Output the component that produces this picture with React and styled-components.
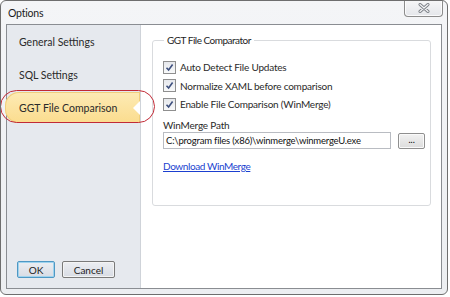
import React from "react";
import styled, { createGlobalStyle } from "styled-components";

const Global = createGlobalStyle`
  html, body {
    margin: 0;
    padding: 0;
    background: #ffffff;
  }
  body {
    font-family: "Lato", "Liberation Sans", sans-serif;
    font-size: 10px;
    letter-spacing: -0.2px;
    color: #1e1e1e;
  }
`;

const Window = styled.div`
  position: relative;
  width: 448px;
  height: 295px;
  border: 1px solid #6e6e6e;
  border-radius: 6px;
  background: linear-gradient(180deg, #f4f5f7 0%, #eceef1 100%);
  display: flex;
  flex-direction: column;
  box-sizing: border-box;
  overflow: hidden;
`;

const TitleBar = styled.div`
  height: 23px;
  display: flex;
  align-items: flex-start;
  padding-left: 7px;
`;

const Title = styled.span`
  margin-top: 6px;
  font-size: 10.5px;
  color: #1b1b1b;
`;

const CloseButton = styled.div`
  margin-left: auto;
  margin-right: 4px;
  margin-top: -1px;
  width: 37px;
  height: 16px;
  border: 1px solid #8c8c8c;
  border-top: none;
  border-radius: 0 0 4px 4px;
  background: linear-gradient(180deg, #f7f7f8 0%, #e4e6ea 100%);
  display: flex;
  align-items: center;
  justify-content: center;
  box-shadow: inset 0 0 0 1px rgba(255, 255, 255, 0.8);
`;

const Body = styled.div`
  flex: 1;
  margin: 0 5px 5px 5px;
  border: 1px solid #8a8d92;
  display: flex;
  background: #ffffff;
`;

const Sidebar = styled.div`
  flex-shrink: 0;
  width: 133px;
  background: #e6e9ee;
  border-right: 1px solid #cfd3d9;
  display: flex;
  flex-direction: column;
  font-size: 10.5px;
  letter-spacing: 0;
`;

const NavItem = styled.div`
  position: relative;
  height: 33px;
  display: flex;
  align-items: center;
  padding-left: 12px;
  color: #2a2a2a;
  ${(p) =>
    p.$active &&
    `
    margin: 1px 0 1px -2px;
    height: 31px;
    padding-left: 14px;
    border-radius: 14px 0 0 14px;
    background: linear-gradient(180deg, #fdebb5 0%, #fbdc8e 100%);
    box-shadow: inset 0 0 0 1px #f1cf7c;
    &::after {
      content: "";
      position: absolute;
      right: 0;
      top: 50%;
      margin-top: -7px;
      border-style: solid;
      border-width: 7px 7px 7px 0;
      border-color: transparent #ffffff transparent transparent;
    }
  `}
`;

const Annotation = styled.div`
  position: absolute;
  left: -5px;
  top: -2px;
  width: 153px;
  height: 31px;
  border: 1.5px solid #c12a36;
  border-radius: 17px;
  pointer-events: none;
`;

const Footer = styled.div`
  margin-top: auto;
  display: flex;
  gap: 7px;
  padding: 0 0 10px 10px;
`;

const Button = styled.button`
  height: 17px;
  width: ${(p) => p.$w}px;
  padding: 0;
  font-family: inherit;
  font-size: 10px;
  color: #222;
  border: 1px solid ${(p) => (p.$primary ? "#4f98c4" : "#7a7a7a")};
  border-radius: 2px;
  background: linear-gradient(180deg, #eceef2 0%, #d8dce4 100%);
  box-shadow: inset 0 0 0 1px ${(p) => (p.$primary ? "#9fd3ee" : "#f4f4f4")};
`;

const Main = styled.div`
  flex: 1;
  min-width: 0;
  padding: 9px 10px 0 11px;
`;

const Group = styled.fieldset`
  margin: 0;
  min-width: 0;
  height: 172px;
  box-sizing: border-box;
  border: 1px solid #d9dbde;
  border-radius: 3px;
  padding: 12px 5px 0 10px;
  display: flex;
  flex-direction: column;
`;

const Legend = styled.legend`
  padding: 0 3px;
  margin-left: 1px;
  letter-spacing: -0.5px;
  color: #1e1e1e;
`;

const CheckRow = styled.label`
  display: flex;
  align-items: center;
  gap: 4px;
  height: 18.5px;
  color: #2a2a2a;
`;

const Box = styled.span`
  width: 11px;
  height: 11px;
  border: 1px solid #8f8f8f;
  background: linear-gradient(180deg, #e6e8ec 0%, #f8f9fa 100%);
  display: flex;
  align-items: center;
  justify-content: center;
`;

const FieldLabel = styled.div`
  margin-top: 5px;
  color: #2a2a2a;
`;

const PathRow = styled.div`
  display: flex;
  align-items: center;
  gap: 7px;
  margin-top: 1px;
`;

const TextBox = styled.div`
  width: 226px;
  height: 15px;
  border: 1px solid #b9bcc2;
  display: flex;
  align-items: center;
  padding-left: 2px;
  font-size: 9.5px;
  letter-spacing: -0.2px;
  color: #111;
  white-space: nowrap;
  overflow: hidden;
`;

const Browse = styled.button`
  width: 27px;
  height: 16px;
  padding: 0 0 3px;
  font-family: inherit;
  font-size: 9px;
  border: 1px solid #8f8f8f;
  border-radius: 2px;
  background: linear-gradient(180deg, #f2f2f2 0%, #dcdcdc 100%);
  box-shadow: inset 0 0 0 1px #fafafa;
  margin-top: 1px;
`;

const Link = styled.a`
  margin-top: 11px;
  color: #1b3fd0;
  letter-spacing: -0.4px;
  text-decoration: underline;
  align-self: flex-start;
`;

const Check = () => (
  <svg width="9" height="9" viewBox="0 0 9 9">
    <path d="M1.5 4.8 L3.6 7 L7.6 1.6" fill="none" stroke="#3d4f7e" strokeWidth="1.6" />
  </svg>
);

const CloseIcon = () => (
  <svg width="12" height="10" viewBox="0 0 12 10">
    <path d="M2 1.5 L10 8.5 M10 1.5 L2 8.5" stroke="#7b7f86" strokeWidth="3" strokeLinecap="round" />
    <path d="M2 1.5 L10 8.5 M10 1.5 L2 8.5" stroke="#f4f5f6" strokeWidth="1.2" strokeLinecap="round" />
  </svg>
);

const options = [
  "Auto Detect File Updates",
  "Normalize XAML before comparison",
  "Enable File Comparison (WinMerge)",
];

export default function App() {
  return (
    <>
      <Global />
      <Window>
        <TitleBar>
          <Title>Options</Title>
          <CloseButton>
            <CloseIcon />
          </CloseButton>
        </TitleBar>
        <Body>
          <Sidebar>
            <NavItem>General Settings</NavItem>
            <NavItem>SQL Settings</NavItem>
            <NavItem $active>
              GGT File Comparison
              <Annotation />
            </NavItem>
            <Footer>
              <Button $primary $w={38}>OK</Button>
              <Button $w={53}>Cancel</Button>
            </Footer>
          </Sidebar>
          <Main>
            <Group>
              <Legend>GGT File Comparator</Legend>
              {options.map((o) => (
                <CheckRow key={o}>
                  <Box>
                    <Check />
                  </Box>
                  {o}
                </CheckRow>
              ))}
              <FieldLabel>WinMerge Path</FieldLabel>
              <PathRow>
                <TextBox>C:\program files (x86)\winmerge\winmergeU.exe</TextBox>
                <Browse>...</Browse>
              </PathRow>
              <Link>Download WinMerge</Link>
            </Group>
          </Main>
        </Body>
      </Window>
    </>
  );
}
